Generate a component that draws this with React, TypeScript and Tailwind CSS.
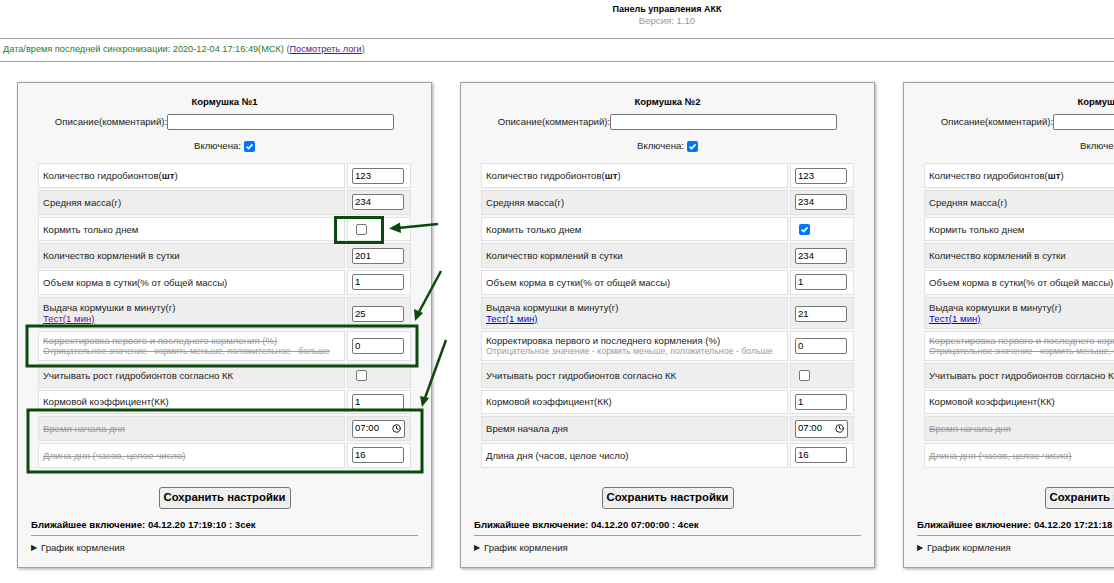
import { Clock } from "lucide-react";

type Row = {
  label: React.ReactNode;
  note?: string;
  link?: boolean;
  value?: string;
  check?: boolean;
  time?: boolean;
  off?: boolean;
};

type Feeder = {
  num: number;
  next: string;
  visited: boolean;
  rows: Row[];
};

const font = { fontFamily: '"Liberation Sans", Arial, sans-serif' };

function makeRows(v: {
  count: string;
  mass: string;
  dayOnly: boolean;
  feeds: string;
  volume: string;
  rate: string;
  corr: string;
  kk: string;
  start: string;
  len: string;
  offCorr: boolean;
  offDay: boolean;
}): Row[] {
  return [
    {
      label: (
        <>
          Количество гидробионтов(<span className="font-bold">шт</span>)
        </>
      ),
      value: v.count,
    },
    { label: "Средняя масса(г)", value: v.mass },
    { label: "Кормить только днем", check: v.dayOnly },
    { label: "Количество кормлений в сутки", value: v.feeds },
    { label: "Объем корма в сутки(% от общей массы)", value: v.volume },
    { label: "Выдача кормушки в минуту(г)", link: true, value: v.rate },
    {
      label: "Корректировка первого и последнего кормления (%)",
      note: "Отрицательное значение - кормить меньше, положительное - больше",
      value: v.corr,
      off: v.offCorr,
    },
    { label: "Учитывать рост гидробионтов согласно КК", check: false },
    { label: "Кормовой коэффициент(КК)", value: v.kk },
    { label: "Время начала дня", value: v.start, time: true, off: v.offDay },
    { label: "Длина дня (часов, целое число)", value: v.len, off: v.offDay },
  ];
}

const feeders: Feeder[] = [
  {
    num: 1,
    next: "04.12.20 17:19:10 : 3сек",
    visited: true,
    rows: makeRows({
      count: "123",
      mass: "234",
      dayOnly: false,
      feeds: "201",
      volume: "1",
      rate: "25",
      corr: "0",
      kk: "1",
      start: "07:00",
      len: "16",
      offCorr: true,
      offDay: true,
    }),
  },
  {
    num: 2,
    next: "04.12.20 07:00:00 : 4сек",
    visited: false,
    rows: makeRows({
      count: "123",
      mass: "234",
      dayOnly: true,
      feeds: "234",
      volume: "1",
      rate: "21",
      corr: "0",
      kk: "1",
      start: "07:00",
      len: "16",
      offCorr: false,
      offDay: false,
    }),
  },
  {
    num: 3,
    next: "04.12.20 17:21:18 : 2сек",
    visited: false,
    rows: makeRows({
      count: "123",
      mass: "234",
      dayOnly: false,
      feeds: "180",
      volume: "1",
      rate: "22",
      corr: "0",
      kk: "1",
      start: "07:00",
      len: "16",
      offCorr: true,
      offDay: true,
    }),
  },
];

function Check({ on }: { on: boolean }) {
  if (on)
    return (
      <span className="inline-flex h-[11px] w-[11px] items-center justify-center rounded-[2px] bg-[#0075ff]">
        <svg width="9" height="9" viewBox="0 0 10 10">
          <path d="M1.8 5.2 L4 7.4 L8.4 2.6" fill="none" stroke="white" strokeWidth="1.8" />
        </svg>
      </span>
    );
  return <span className="inline-block h-[11px] w-[11px] rounded-[2px] border border-[#767676] bg-white" />;
}

function FeederCard({ f }: { f: Feeder }) {
  return (
    <div className="w-[415px] shrink-0 border border-[#a3a3a3] bg-[#f7f7f7] px-[13px] pb-[13px] pt-[13px] shadow-[1px_1px_3px_rgba(0,0,0,0.35)]">
      <div className="text-center text-[9.5px] font-bold leading-[12px] text-black">Кормушка №{f.num}</div>
      <div className="mt-[6px] flex items-center justify-center text-[9.6px] text-[#222]">
        <span>Описание(комментарий):</span>
        <span className="h-[16px] w-[227px] rounded-[2px] border border-[#767676] bg-white" />
      </div>
      <div className="mt-[9px] flex items-center justify-center gap-[3px] text-[9.6px] text-[#222]">
        <span>Включена:</span>
        <Check on />
      </div>
      <div className="mx-[7px] mt-[10px] grid grid-cols-[307px_64px] gap-[2px]">
        {f.rows.map((r, i) => {
          const bg = i % 2 === 1 ? "bg-[#eeeeee]" : "bg-white";
          const h = r.note ? "h-[30px]" : r.link ? "h-[32px]" : "h-[24.7px]";
          return (
            <div key={i} className="contents">
              <div
                className={`flex min-w-0 flex-col justify-center overflow-hidden whitespace-nowrap border border-[#e2e2e2] px-[4px] text-[9.6px] leading-[11px] ${bg} ${h} ${
                  r.off ? "text-[#9a9a9a] line-through" : "text-[#222]"
                }`}
              >
                <span>{r.label}</span>
                {r.note && <span className="text-[8.8px] text-[#9a9a9a]">{r.note}</span>}
                {r.link && (
                  <span className={`underline ${f.visited ? "text-[#551a8b]" : "text-[#0000ee]"}`}>Тест(1 мин)</span>
                )}
              </div>
              <div
                className={`flex items-center border border-[#e2e2e2] ${bg} ${h} ${
                  r.check !== undefined ? "pl-[8px]" : "pl-[4px]"
                }`}
              >
                {r.check !== undefined ? (
                  <Check on={r.check} />
                ) : r.time ? (
                  <span className="flex h-[18px] w-[53px] items-center justify-between rounded-[2px] border border-[#767676] bg-white pl-[2px] pr-[3px] text-[9.6px] text-black">
                    {r.value}
                    <Clock size={9} strokeWidth={2.4} />
                  </span>
                ) : (
                  <span
                    className={`flex h-[16px] w-[52px] items-center rounded-[2px] border border-[#767676] bg-white pl-[2px] text-[9.6px] text-black ${
                      r.link ? "mt-[2px]" : ""
                    }`}
                  >
                    {r.value}
                  </span>
                )}
              </div>
            </div>
          );
        })}
      </div>
      <div className="mt-[19px] flex justify-center">
        <button className="h-[22px] w-[132px] rounded-[3px] border border-[#767676] bg-[#efefef] text-[11.3px] font-bold text-black">
          Сохранить настройки
        </button>
      </div>
      <div className="mt-[10px] text-[9.6px] font-bold leading-[12px] text-black">Ближайшее включение: {f.next}</div>
      <div className="mt-[4px] border-t border-[#a0a0a0]" />
      <div className="mt-[6px] flex items-center gap-[4px] text-[9.6px] leading-[12px] text-[#222]">
        <span className="text-[8px]">▶</span>
        <span>График кормления</span>
      </div>
    </div>
  );
}

function Marks() {
  const c = "#0c4a0c";
  return (
    <svg className="pointer-events-none absolute left-0 top-0" width="1114" height="583">
      <rect x="335.5" y="217.5" width="47" height="25" fill="none" stroke={c} strokeWidth="3" />
      <rect x="27" y="326" width="390" height="40" fill="none" stroke={c} strokeWidth="3" />
      <rect x="28" y="410" width="394" height="62" fill="none" stroke={c} strokeWidth="3" />
      <line x1="438" y1="224" x2="398" y2="228" stroke={c} strokeWidth="2.5" />
      <polygon points="389,228.5 400,222.5 401,233" fill={c} />
      <line x1="441" y1="271" x2="419" y2="312" stroke={c} strokeWidth="2.5" />
      <polygon points="415,321 414,309 423,313" fill={c} />
      <line x1="446" y1="340" x2="425" y2="398" stroke={c} strokeWidth="2.5" />
      <polygon points="422,407 420,396 429,398" fill={c} />
    </svg>
  );
}

export default function App() {
  return (
    <div className="relative h-[583px] w-[1114px] overflow-hidden bg-white" style={font}>
      <div className="w-[1334px]">
        <div className="pt-[4px] text-center">
          <div className="text-[9px] font-bold leading-[11px] text-black">Панель управления АКК</div>
          <div className="text-[9.6px] leading-[12px] text-[#9a9a9a]">Версия: 1.10</div>
        </div>
      </div>
      <div className="mt-[11px] border-t border-[#a0a0a0]" />
      <div className="flex h-[22px] items-center pl-[3px] text-[9.2px] text-[#2b7a2b]">
        Дата/время последней синхронизации: 2020-12-04 17:16:49(МСК) (
        <span className="text-[#551a8b] underline">Посмотреть логи</span>)
      </div>
      <div className="border-t border-[#a0a0a0]" />
      <div className="flex gap-[28px] pl-[17px] pt-[20px]">
        {feeders.map((f) => (
          <FeederCard key={f.num} f={f} />
        ))}
      </div>
      <Marks />
    </div>
  );
}
